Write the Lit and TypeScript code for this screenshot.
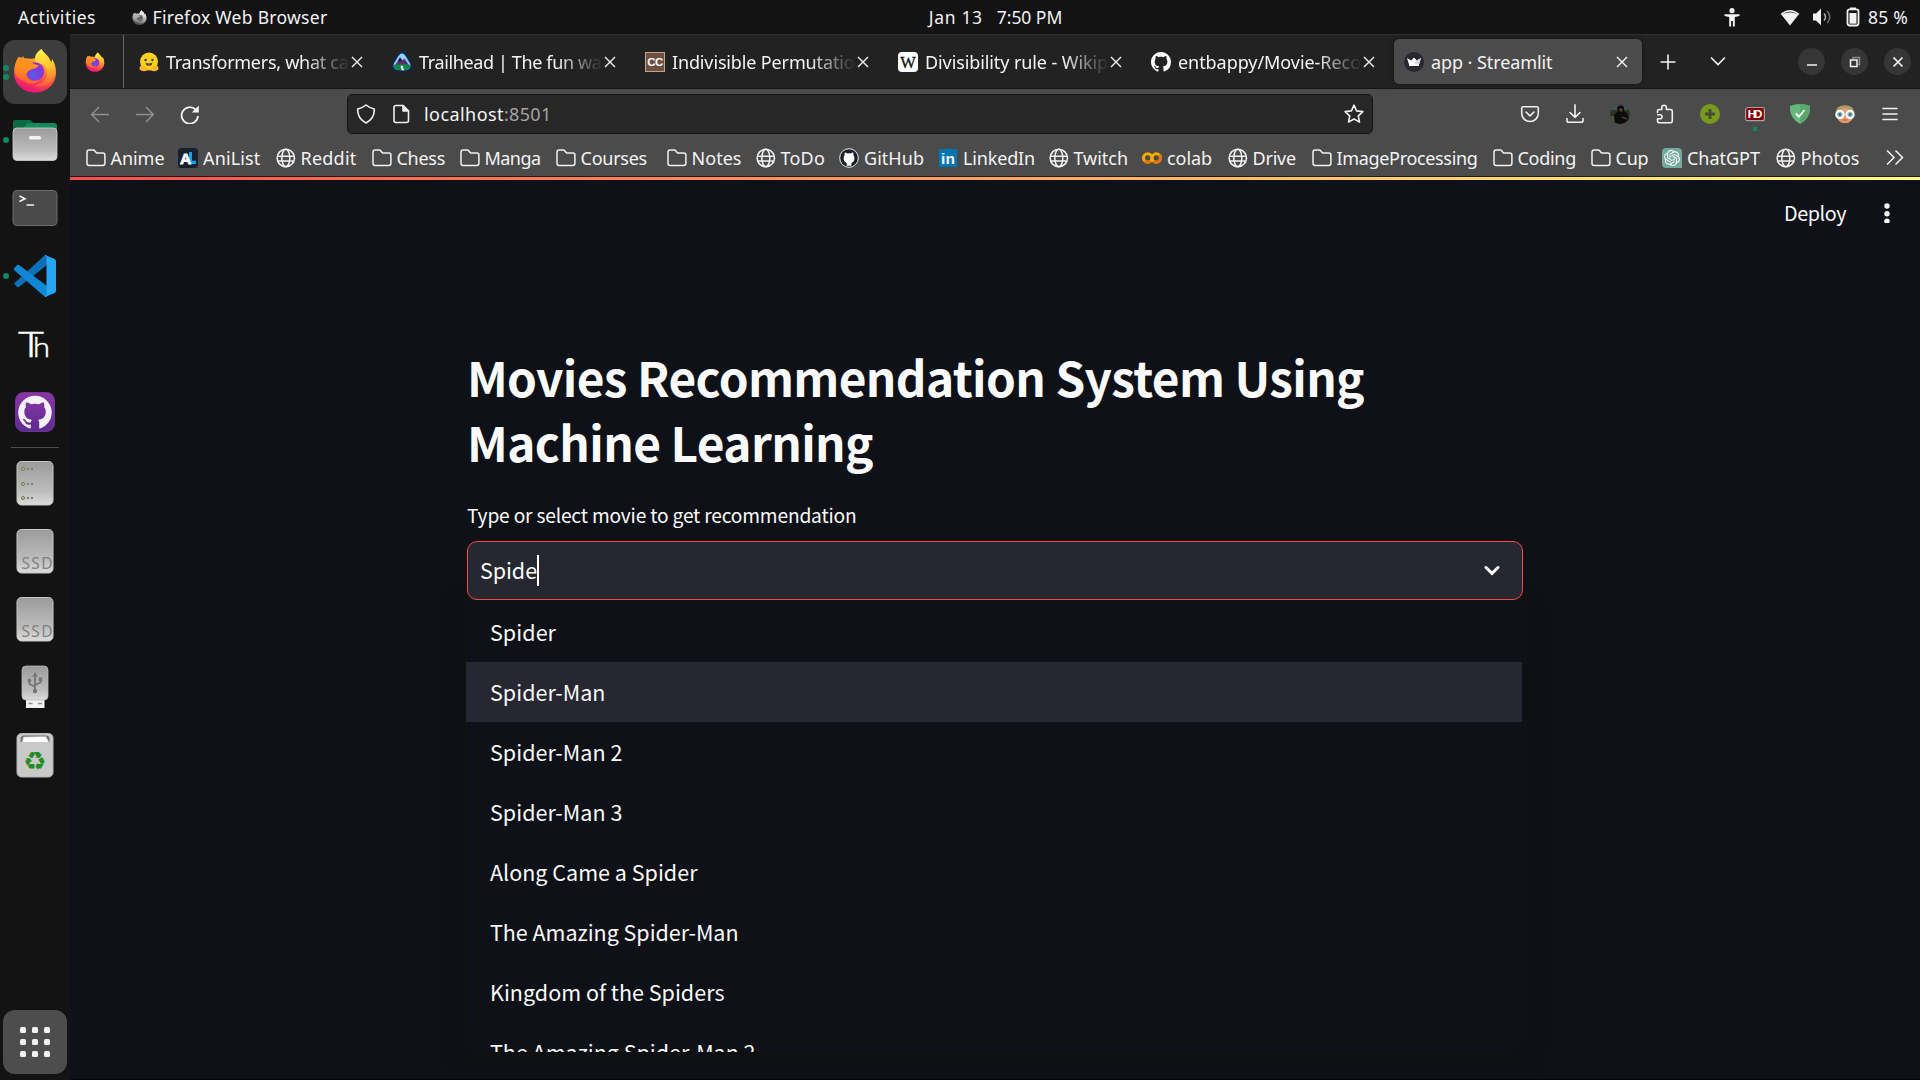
import { LitElement, html, css, svg, TemplateResult } from "lit";
import { customElement, property, query } from "lit/decorators.js";
import { styleMap } from "lit/directives/style-map.js";
import { classMap } from "lit/directives/class-map.js";

const GITHUB_MARK =
  "M8 0C3.58 0 0 3.58 0 8c0 3.54 2.29 6.53 5.47 7.59.4.07.55-.17.55-.38 0-.19-.01-.82-.01-1.49-2.01.37-2.53-.49-2.69-.94-.09-.23-.48-.94-.82-1.13-.28-.15-.68-.52-.01-.53.63-.01 1.08.58 1.23.82.72 1.21 1.87.87 2.33.66.07-.52.28-.87.51-1.07-1.78-.2-3.64-.89-3.64-3.95 0-.87.31-1.59.82-2.15-.08-.2-.36-1.02.08-2.12 0 0 .67-.21 2.2.82.64-.18 1.32-.27 2-.27.68 0 1.36.09 2 .27 1.53-1.04 2.2-.82 2.2-.82.44 1.1.16 1.92.08 2.12.51.56.82 1.27.82 2.15 0 3.07-1.87 3.75-3.65 3.95.29.25.54.73.54 1.48 0 1.07-.01 1.93-.01 2.2 0 .21.15.46.55.38A8.013 8.013 0 0016 8c0-4.42-3.58-8-8-8z";

const OPENAI_MARK =
  "M22.2819 9.8211a5.9847 5.9847 0 0 0-.5157-4.9108 6.0462 6.0462 0 0 0-6.5098-2.9A6.0651 6.0651 0 0 0 4.9807 4.1818a5.9847 5.9847 0 0 0-3.9977 2.9 6.0462 6.0462 0 0 0 .7427 7.0966 5.98 5.98 0 0 0 .511 4.9107 6.051 6.051 0 0 0 6.5146 2.9001A5.9847 5.9847 0 0 0 13.2599 24a6.0557 6.0557 0 0 0 5.7718-4.2058 5.9894 5.9894 0 0 0 3.9977-2.9001 6.0557 6.0557 0 0 0-.7475-7.0729zm-9.022 12.6081a4.4755 4.4755 0 0 1-2.8764-1.0408l.1419-.0804 4.7783-2.7582a.7948.7948 0 0 0 .3927-.6813v-6.7369l2.02 1.1686a.071.071 0 0 1 .038.052v5.5826a4.504 4.504 0 0 1-4.4945 4.4944zm-9.6607-4.1254a4.4708 4.4708 0 0 1-.5346-3.0137l.142.0852 4.783 2.7582a.7712.7712 0 0 0 .7806 0l5.8428-3.3685v2.3324a.0804.0804 0 0 1-.0332.0615L9.74 19.9502a4.4992 4.4992 0 0 1-6.1408-1.6464zM2.3408 7.8956a4.485 4.485 0 0 1 2.3655-1.9728V11.6a.7664.7664 0 0 0 .3879.6765l5.8144 3.3543-2.0201 1.1685a.0757.0757 0 0 1-.071 0l-4.8303-2.7865A4.504 4.504 0 0 1 2.3408 7.872zm16.5963 3.8558L13.1038 8.364 15.1192 7.2a.0757.0757 0 0 1 .071 0l4.8303 2.7913a4.4944 4.4944 0 0 1-.6765 8.1042v-5.6772a.79.79 0 0 0-.407-.667zm2.0107-3.0231l-.142-.0852-4.7735-2.7818a.7759.7759 0 0 0-.7854 0L9.409 9.2297V6.8974a.0662.0662 0 0 1 .0284-.0615l4.8303-2.7866a4.4992 4.4992 0 0 1 6.6802 4.66zM8.3065 12.863l-2.02-1.1638a.0804.0804 0 0 1-.038-.0567V6.0742a4.4992 4.4992 0 0 1 7.3757-3.4537l-.142.0805L8.704 5.459a.7948.7948 0 0 0-.3927.6813zm1.0976-2.3654l2.602-1.4998 2.6069 1.4998v2.9994l-2.5974 1.4997-2.6067-1.4997Z";

const icon = (size: number, body: TemplateResult, box = `0 0 ${size} ${size}`) =>
  html`<svg class="icon" width=${size} height=${size} viewBox=${box} fill="none">${body}</svg>`;

const firefoxArt = svg`
  <defs>
    <linearGradient id="ffBody" x1=".75" y1="0" x2=".35" y2="1">
      <stop offset="0" stop-color="#ffd43a"/><stop offset=".35" stop-color="#ff9a2c"/>
      <stop offset=".65" stop-color="#ff4a45"/><stop offset="1" stop-color="#e5127c"/>
    </linearGradient>
    <linearGradient id="ffFlame" x1=".4" y1="0" x2=".5" y2="1">
      <stop offset="0" stop-color="#fff44f"/><stop offset=".5" stop-color="#ffc32c"/><stop offset="1" stop-color="#ff5a3c"/>
    </linearGradient>
    <radialGradient id="ffGlobe" cx=".4" cy=".7" r=".7">
      <stop offset="0" stop-color="#5a5be8"/><stop offset=".5" stop-color="#7a3fe0"/><stop offset="1" stop-color="#a02bd0"/>
    </radialGradient>
    <linearGradient id="ffHead" x1=".5" y1="0" x2=".3" y2="1">
      <stop offset="0" stop-color="#ff9a1f"/><stop offset=".5" stop-color="#ff8a20"/><stop offset="1" stop-color="#ff5a35"/>
    </linearGradient>
  </defs>
  <path fill="url(#ffBody)" d="M21 43.500C9 43.500 0 35 0 23.500C0 17 2.500 11 5 8C12 10 18 10 22 9C24 6 25 3 27.500 0C29 4 35 6 37 13C38 12 38 11 38 10C41 14 42 19 42 23.500C42 35 33 43.500 21 43.500Z"/>
  <path fill="url(#ffFlame)" d="M27.500 0C21 4 20 9 22 13.500C29 14 33 18 33 24C33 31 28 36 20 36.500C32 40 41 33 41 22C41 17 40 13 38 10C38 12 38 13 37 14.500C36 8 30 5 27.500 0Z"/>
  <circle cx="21" cy="22.500" r="9.200" fill="url(#ffGlobe)"/>
  <path fill="url(#ffHead)" d="M0.500 22C0.500 15 3 10 5 7.500C5 9 5.500 11 6.500 12C7 10 8 8 9.500 7C9.500 9.500 11 11.500 13 12C16 12 19 15.500 24.500 16C24 19 20 19.500 17 20.500C13 22 12 25 13 28C15 32 21 33 25 31C21 36 14 36 10 32C5 30 1 27 0.500 22Z"/>`;

const folder = icon(20, svg`<path d="M1 15.200V4.200Q1 2 3.200 2H7.200Q8.100 2 8.700 2.700L10.500 4.900H16.800Q18.900 4.900 18.900 7V15.200Q18.900 17.400 16.700 17.400H3.200Q1 17.400 1 15.200Z" stroke="#f1f1f1" stroke-width="1.500"/>`);
const globe = icon(20, svg`<g stroke="#f4f4f4" stroke-width="1.500"><circle cx="9.800" cy="10" r="8.700"/><ellipse cx="9.800" cy="10" rx="4" ry="8.700"/><path d="M1 8.300H18.600M2 13H17.600"/></g>`);
const closeX = icon(12, svg`<path d="M1 1L11 11M11 1L1 11" stroke="#f3f3f3" stroke-width="1.400"/>`);

const favicons: Record<string, TemplateResult> = {
  hugging: icon(20, svg`
    <circle cx="10" cy="9.500" r="9" fill="#ffd21e"/>
    <path d="M1 18C-.5 15 2 12.500 4 14L7 15.500L10 17L13 15.500L16 14C18 12.500 20.500 15 19 18Q16 20 12 18.500L10 17.500L8 18.500Q4 20 1 18Z" fill="#ffb62a"/>
    <circle cx="6.600" cy="8" r="1.200" fill="#3a3b45"/><circle cx="13.400" cy="8" r="1.200" fill="#3a3b45"/>
    <path d="M6.500 10.500Q10 12.500 13.500 10.500Q13 14 10 14Q7 14 6.500 10.500Z" fill="#3a3b45"/><path d="M8 13Q10 11.800 12 13Q10 15 8 13Z" fill="#ef4e4e"/>`),
  trailhead: icon(20, svg`
    <path d="M10 .8C12 .8 13 2 14 3.500L18.500 11Q20.500 16 16.500 18Q10 20 3.500 18Q-.5 16 1.500 11L6 3.500C7 2 8 .8 10 .8Z" fill="#8fd4f5" stroke="#0b2a6b" stroke-width="1.400"/>
    <path d="M2.500 14L8 5.500L10.500 8.500L12.500 6.500L17.500 14Z" fill="#57306f"/><path d="M6 9L8 5.500L10 8.500L8 9.500Z" fill="#24124a"/>
    <path d="M1.800 13Q10 11.500 18.200 13Q18.500 16.500 16 17.400Q10 19 4 17.400Q1.500 16.500 1.800 13Z" fill="#0e8a43"/>
    <path d="M9 13.500Q13 14.500 10.500 15.500L12.500 18.200H9.500Q10 16 8.500 15.200Z" fill="#fff"/>`),
  chef: icon(20, svg`<rect x=".5" y=".5" width="19" height="19" fill="#6d5141" stroke="#c3a58f"/><text x="10" y="14" text-anchor="middle" font-family="Liberation Sans, sans-serif" font-weight="700" font-size="11.500" letter-spacing="-.5" fill="#fff">CC</text>`),
  wiki: icon(20, svg`<rect width="20" height="20" rx="4" fill="#fff"/><text x="10" y="15.500" text-anchor="middle" font-family="Liberation Serif, serif" font-size="16.500" textLength="17" fill="#111" stroke="#111" stroke-width=".3">W</text>`),
  github: icon(20, svg`<path d=${GITHUB_MARK} fill="#fff"/>`, "0 0 16 16"),
  streamlit: icon(20, svg`<circle cx="10" cy="10" r="10" fill="#262730"/><path d="M3 6L7.200 8.600L10 5.500L12.800 8.600L17 6L15 12.600H5Z" fill="#fff"/><path d="M12.800 8.600L17 6L15 12.600H10Z" fill="#d5d5dc"/><rect x="5" y="12" width="10" height="2" rx=".6" fill="#fff"/>`),
  firefox: icon(20, firefoxArt, "0 -1 42 45"),
  anilist: icon(20, svg`<rect width="20" height="20" rx="3" fill="#19212d"/><path d="M11 4H14V12.700H18V16H13Q11 16 11 14Z" fill="#02a9ff"/><text x="2" y="15.700" font-family="Liberation Sans, sans-serif" font-weight="700" font-size="15.500" fill="#fff" stroke="#fff" stroke-width=".8">A</text>`),
  githubBadge: icon(20, svg`<circle cx="10" cy="10" r="9.300" fill="#191e26" stroke="#eee" stroke-width="1"/><g transform="translate(1.300 1.300) scale(1.090)"><path d="M5.800 15.200V12.500Q3 11.500 3 8.200Q3 6.500 4 5.300Q3.700 4 4.200 3Q5.300 3 6.500 3.900Q8 3.500 9.500 3.900Q10.700 3 11.800 3Q12.300 4 12 5.300Q13 6.500 13 8.200Q13 11.500 10.200 12.500V15.200Z" fill="#fff"/></g>`),
  linkedin: icon(20, svg`<rect x="1" y="1" width="18" height="18" rx="1" fill="#0077b5"/><text x="10" y="15.800" text-anchor="middle" font-family="Liberation Sans, sans-serif" font-weight="700" font-size="15.500" fill="#fff">in</text>`),
  colab: icon(20, svg`<g stroke-width="3"><circle cx="5.700" cy="10" r="4.200" stroke="#f9ab00"/><circle cx="14.300" cy="10" r="4.200" stroke="#f9ab00"/><path d="M2.700 13A4.200 4.200 0 0 0 8.700 13" stroke="#e8710a"/><path d="M17.300 7A4.200 4.200 0 0 1 11.300 13" stroke="#e8710a"/></g>`),
  chatgpt: icon(20, svg`<path d="M4 0H16Q20 0 20 4V20H4Q0 20 0 16V4Q0 0 4 0Z" fill="#74aa9c"/><g transform="translate(2 2) scale(.667)"><path d=${OPENAI_MARK} fill="#fff"/></g>`),
  folder,
  globe,
};

/** Text whose tracking is adjusted so that the run fills a given width. */
@customElement("fit-text")
class FitText extends LitElement {
  @property() text = "";
  @property({ type: Number }) width = 0;
  @query("span") private run!: HTMLSpanElement;

  static styles = css`
    :host { display: inline-block; white-space: pre; flex: none; }
  `;

  updated() {
    this.run.style.letterSpacing = "0px";
    const natural = this.run.getBoundingClientRect().width;
    this.run.style.letterSpacing = `${(this.width - natural) / this.text.length}px`;
  }

  render() {
    return html`<span>${this.text}</span>`;
  }
}

const shared = css`
  * { box-sizing: border-box; }
  :host { box-sizing: border-box; }
  .icon { display: block; flex: none; }
`;

@customElement("top-bar")
class TopBar extends LitElement {
  static styles = [shared, css`
    :host { display: grid; grid-template-columns: 1fr auto 1fr; align-items: center; height: 34px; background: #131313; color: #f2f2f2; font: 17.500px/24px "Noto Sans", sans-serif; }
    .group { display: flex; align-items: center; }
    .left { padding-left: 18px; }
    .app { display: flex; align-items: center; gap: 6px; margin-left: 35.500px; }
    .clock { gap: 14px; padding: 0 0 1px 71px; }
    .right { justify-content: flex-end; padding-right: 12px; }
    .access { margin-right: 40px; }
    .wifi { margin-right: 12px; }
    .sound { margin-right: 14px; }
    .battery { margin-right: 8px; }
    .gray { filter: grayscale(1) brightness(1.100); }
  `];

  render() {
    return html`
      <div class="group left">
        <fit-text text="Activities" width="78"></fit-text>
        <div class="app">
          <span class="gray">${icon(15, firefoxArt, "0 -1 42 45")}</span>
          <fit-text text="Firefox Web Browser" width="175"></fit-text>
        </div>
      </div>
      <div class="group clock">
        <fit-text text="Jan 13" width="54"></fit-text>
        <fit-text text="7:50 PM" width="65.500"></fit-text>
      </div>
      <div class="group right">
        <svg class="icon access" width="16" height="19" viewBox="0 0 16 19"><circle cx="8" cy="2.700" r="2.600" fill="#f2f2f2"/><path d="M.5 6.300H15.500V8L10.800 9V18.500H8.900V13H7.100V18.500H5.200V9L.5 8Z" fill="#f2f2f2"/></svg>
        <svg class="icon wifi" width="20" height="17" viewBox="0 0 20 17"><path d="M1 5.500Q10-2 19 5.500" stroke="#f2f2f2" stroke-width="1.500" fill="none"/><path d="M1.500 5.800Q10 .5 18.500 5.800L10 16.500Z" fill="#f2f2f2"/></svg>
        <svg class="icon sound" width="20" height="18" viewBox="0 0 20 18"><path d="M1 5.500H4L9 .8V17.200L4 12.500H1Z" fill="#f2f2f2"/><path d="M12 5.500Q15 9 12 12.500" stroke="#aaa" stroke-width="1.500" fill="none"/><path d="M15.200 3Q20.300 9 15.200 15" stroke="#6f6f6f" stroke-width="1.500" fill="none"/></svg>
        <svg class="icon battery" width="14" height="20" viewBox="0 0 14 20"><path d="M4 .5H10V2H4Z" fill="#f2f2f2"/><rect x="1.500" y="2.300" width="11" height="16.200" rx="2.200" fill="none" stroke="#f2f2f2" stroke-width="1.800"/><rect x="3.500" y="6" width="7" height="10.700" fill="#f2f2f2"/></svg>
        <fit-text text="85 %" width="40"></fit-text>
      </div>
    `;
  }
}

interface DockItem { name: string; art: TemplateResult; dots?: number; active?: boolean; }

const panel = svg`
  <rect x="14" y="10.500" width="36" height="43.500" rx="4.500" fill="url(#metal)" stroke="#c9c9c9"/>`;
const metal = svg`<defs><linearGradient id="metal" x1="0" y1="0" x2="0" y2="1"><stop offset="0" stop-color="#9b9b9b"/><stop offset=".7" stop-color="#bdbdbd"/><stop offset="1" stop-color="#dcdcdc"/></linearGradient></defs>`;
const ssd = svg`${metal}${panel}<text x="18.500" y="49.500" font-family="Noto Sans, sans-serif" font-size="15.500" textLength="31" fill="#828282">SSD</text>`;
const led = (y: number) => svg`<circle cx="20" cy=${y} r="1.600" fill="#9ccc3c" stroke="#6c6c6c" stroke-width=".8"/><path d=${`M24 ${y}H26M28 ${y}H30`} stroke="#7c7c7c" stroke-width="2"/>`;

const launchers: DockItem[] = [
  { name: "firefox", active: true, dots: 2, art: svg`<svg x="11" y="9" width="42" height="44" viewBox="0 0 42 44">${firefoxArt}</svg>` },
  { name: "files", dots: 1, art: svg`${metal}
    <path d="M10 30V15Q10 12 13 12H26Q28 12 29 14L30 15H51Q54 15 54 18V30Z" fill="#118a5a"/>
    <path d="M10 21V15Q10 12 13 12H26Q28 12 29 14L30 15H24L20 21Z" fill="#0b6b45"/>
    <rect x="10" y="20" width="44" height="32.500" rx="4" fill="url(#metal)" stroke="#cfcfcf" stroke-width=".8"/>
    <rect x="26" y="28" width="12" height="3.400" rx="1.500" fill="#f4f4f4"/>` },
  { name: "terminal", art: svg`<rect x="10" y="14.500" width="44" height="35" rx="4" fill="#4a4a4a" stroke="#6c6c6c"/><path d="M16.500 20L22 22.700L16.500 25.500M23.500 29H31" stroke="#f2f2f2" stroke-width="1.600"/>` },
  { name: "code", dots: 1, art: svg`
    <path d="M11 39.500L14 43Q15 43.600 16 43L44 21V11L42 11Z" fill="#0d6fb5"/>
    <path d="M11 24.500L14 21Q15 20.500 16 21L44 42V53L42 53L11 26Z" fill="#1187d3"/>
    <path d="M42 11L51.500 15Q53 15.800 53 17V47Q53 48.300 51.500 49L42 53Q43.500 52 43.500 50V14Q43.500 12 42 11Z" fill="#26a6f2"/>` },
  { name: "notes", art: svg`<g font-family="Lato, sans-serif" font-weight="300" fill="#fff" stroke="#fff" stroke-width=".5"><text x="15" y="44.500" font-size="36" textLength="26" lengthAdjust="spacingAndGlyphs">T</text><text x="30" y="45" font-size="28" textLength="17" lengthAdjust="spacingAndGlyphs">h</text></g>` },
  { name: "github", art: svg`<defs><linearGradient id="violet" x1="0" y1="0" x2="0" y2="1"><stop offset="0" stop-color="#8b35a5"/><stop offset="1" stop-color="#5c2c91"/></linearGradient></defs>
    <rect x="12.500" y="12.500" width="39" height="39" rx="8" fill="url(#violet)" stroke="#7a3a9c" stroke-width=".8"/><g transform="translate(15.200 15.700) scale(2.100)"><path d=${GITHUB_MARK} fill="#f4f0f8"/></g>` },
];

const drives: DockItem[] = [
  { name: "disk", art: svg`${metal}${panel}${led(18)}${led(33)}${led(47)}` },
  { name: "ssd-a", art: ssd },
  { name: "ssd-b", art: ssd },
  { name: "usb", art: svg`${metal}<rect x="23" y="44" width="18.500" height="9" fill="#f2f2f2"/><path d="M25.500 48.500H29.500M35 48.500H39" stroke="#8f8f8f" stroke-width="1.600"/>
    <rect x="19" y="11" width="26" height="34" rx="4" fill="url(#metal)" stroke="#b8b8b8" stroke-width=".8"/>
    <path d="M32 36V19M32 32L26.500 29V25M32 30L37.500 27.500V23.500" stroke="#757575" stroke-width="1.800"/><path d="M29.300 21.500L32 17L34.700 21.500Z" fill="#757575"/><circle cx="32" cy="36" r="2.200" fill="#757575"/><circle cx="26.500" cy="25.500" r="1.900" fill="#757575"/><rect x="35.800" y="22.500" width="3.500" height="3.500" fill="#757575"/>` },
  { name: "trash", art: svg`${metal}<rect x="14" y="10.500" width="36" height="43.500" rx="4.500" fill="#c9c9c9" stroke="#b5b5b5"/><path d="M17.500 19V16Q17.500 12.500 21 12.500H43Q46.500 12.500 46.500 16V19Z" fill="#6e6e6e"/><path d="M19 19.500L20.500 14L43 13.500L46 19.500Z" fill="#fff" stroke="#bbb" stroke-width=".7"/>
    <text x="32" y="46.500" text-anchor="middle" font-family="DejaVu Sans, sans-serif" font-size="26" fill="#228b22">♻</text>` },
];

@customElement("app-dock")
class AppDock extends LitElement {
  static styles = [shared, css`
    :host { display: flex; flex-direction: column; align-items: center; width: 70px; padding: 6px 3px; background: #131313; }
    .list { display: flex; flex-direction: column; gap: 4px; }
    .tile { position: relative; width: 64px; height: 64px; border-radius: 12px; }
    .active { background: #3d3d3d; }
    .dots { position: absolute; left: 0; top: 0; height: 64px; display: flex; flex-direction: column; justify-content: center; gap: 3px; }
    .dot { width: 6px; height: 6px; border-radius: 50%; background: #0f8a60; }
    .rule { width: 48px; height: 1px; margin: 3px 0; background: #4f4f4f; }
    .apps { margin-top: auto; background: #4d4d4d; }
  `];

  private tile(item: DockItem) {
    return html`<div class=${classMap({ tile: true, active: !!item.active })}>
      ${icon(64, item.art)}
      <div class="dots">${Array.from({ length: item.dots ?? 0 }, () => html`<span class="dot"></span>`)}</div>
    </div>`;
  }

  render() {
    const grid = [17, 29, 41];
    return html`
      <div class="list">${launchers.map((i) => this.tile(i))}</div>
      <div class="rule"></div>
      <div class="list">${drives.map((i) => this.tile(i))}</div>
      <div class="tile apps">${icon(64, svg`${grid.map((y) => grid.map((x) => svg`<rect x=${x} y=${y} width="6" height="6" rx="1.500" fill="#f0f0f0"/>`))}`)}</div>
    `;
  }
}

const tabs = [
  { icon: "hugging", title: "Transformers, what ca", width: 182.5 },
  { icon: "trailhead", title: "Trailhead | The fun wa", width: 182.5 },
  { icon: "chef", title: "Indivisible Permutatio", width: 182.5 },
  { icon: "wiki", title: "Divisibility rule - Wikip", width: 183 },
  { icon: "github", title: "entbappy/Movie-Reco", width: 183 },
  { icon: "streamlit", title: "app · Streamlit", width: 121.5, active: true },
];

// Each entry: icon, label, label width, distance to the next entry's icon.
const bookmarks: [string, string, number, number][] = [
  ["folder", "Anime", 54, 92.5],
  ["anilist", "AniList", 57.5, 97.5],
  ["globe", "Reddit", 56, 96],
  ["folder", "Chess", 48.5, 88],
  ["folder", "Manga", 56, 96],
  ["folder", "Courses", 66.5, 111],
  ["folder", "Notes", 50, 89],
  ["globe", "ToDo", 44.5, 83.5],
  ["githubBadge", "GitHub", 60, 99],
  ["linkedin", "LinkedIn", 72, 110.5],
  ["globe", "Twitch", 54.5, 93.5],
  ["colab", "colab", 45, 85.5],
  ["globe", "Drive", 43.5, 84],
  ["folder", "ImageProcessing", 141, 181],
  ["folder", "Coding", 58.5, 98],
  ["folder", "Cup", 33, 71.5],
  ["chatgpt", "ChatGPT", 73, 113.5],
  ["globe", "Photos", 59, 109],
];

const S = (body: TemplateResult, size = 20) => icon(size, svg`<g stroke="#f1f1f1" stroke-width="1.600" stroke-linecap="round" stroke-linejoin="round">${body}</g>`);

const extensions: TemplateResult[] = [
  S(svg`<path d="M3.300 2.700H16.700Q18.300 2.700 18.300 4.300V9.200A8.300 8.300 0 0 1 1.700 9.200V4.300Q1.700 2.700 3.300 2.700ZM6 8L10 11.800L14 8"/>`),
  S(svg`<path d="M10 .8V13M5 8.500L10 13.300L15 8.500M2 14.500V16.500Q2 18.300 3.800 18.300H16.200Q18 18.300 18 16.500V14.500"/>`),
  icon(20, svg`<defs><clipPath id="face"><circle cx="10" cy="10" r="10"/></clipPath></defs><g clip-path="url(#face)"><rect width="20" height="20" fill="#2a3524"/><rect width="20" height="6" fill="#46545a"/><rect y="12" width="6" height="6" fill="#47562f"/><path d="M5 20L4 12Q5 8.500 8 8L7 4Q8 .8 11.500 1.200Q14.800 2 14 7L17 9L20 20Z" fill="#0c0c0e"/><path d="M9 4.500H12.500V7.500H10Z" fill="#5d4538"/><path d="M12 13L17 15" stroke="#6d4c3a" stroke-width="1.200"/></g>`),
  S(svg`<path d="M2.500 8.500V7Q2.500 5.500 4 5.500H6.800V3.500A2.300 2.300 0 0 1 11.400 3.500V5.500H15.500Q17.300 5.500 17.300 7.300V16.700Q17.300 18.700 15.300 18.700H4.500Q2.500 18.700 2.500 16.700V14.800H5A2 2 0 0 0 5 10.800H2.700"/>`),
  icon(20, svg`<circle cx="10" cy="10" r="10" fill="#7a9a1e"/><path d="M10 5V15M5 10H15" stroke="#454b35" stroke-width="3"/>`),
  icon(20, svg`<rect x=".6" y="3.500" width="18.800" height="13.200" rx="2" fill="#850000" stroke="#a9a0a0" stroke-width="1.200"/><text x="10" y="14.300" text-anchor="middle" font-family="Liberation Sans, sans-serif" font-weight="700" font-size="11.500" textLength="14.500" fill="#fff">HD</text>`),
  icon(20, svg`<path d="M0 2Q5 0 10 0Q15 0 20 2V6Q19 15 10 20Q1 15 0 6Z" fill="#67b979"/><path d="M10 0Q15 0 20 2V6Q19 15 10 20Z" fill="#5aa76c"/><path d="M5.800 9.500L9 12.700L14.500 6" stroke="#fff" stroke-width="1.800"/>`),
  icon(20, svg`<circle cx="10" cy="10.500" r="8.700" fill="#e69a6b"/><path d="M.8 10Q0 1.500 9.500 1.200Q19.500 1 19.200 10L15 6.500L4 7Z" fill="#b09a63"/><path d="M6 5Q10 3 15 6L13 8H7Z" fill="#e0a078"/><circle cx="4.900" cy="10.500" r="3.700" fill="#8fc0d0" stroke="#fff" stroke-width="1.900"/><circle cx="15.100" cy="10.500" r="3.700" fill="#8fc0d0" stroke="#fff" stroke-width="1.900"/><circle cx="4.900" cy="10.500" r="1.300" fill="#33596b"/><circle cx="15.100" cy="10.500" r="1.300" fill="#33596b"/><path d="M7.500 16H12.500" stroke="#b35a48"/>`),
  S(svg`<path d="M3 4.500H17M3 10H17M3 15.500H17"/>`),
];

@customElement("browser-chrome")
class BrowserChrome extends LitElement {
  static styles = [shared, css`
    :host { display: block; background: #4b4b4b; color: #f4f4f4; font: 18px/26px "Noto Sans", sans-serif; }
    .strip { display: flex; align-items: center; height: 55px; background: #222; border-top: 1px solid #303030; border-bottom: 1px solid #141414; }
    .pinned { width: 54px; height: 53px; padding: 0 0 0 15px; display: flex; align-items: center; border-right: 1px solid #686868; }
    .tabs { display: flex; gap: 5px; padding-left: 5px; }
    .tab { display: flex; align-items: center; width: 248px; height: 45px; padding-left: 10px; border-radius: 5px; }
    .tab.active { background: #4b4b4b; box-shadow: 0 0 4px rgba(0, 0, 0, 0.450); }
    .title { width: 184px; margin: 0 -1px 0 7px; height: 26px; white-space: nowrap; -webkit-mask-image: linear-gradient(90deg, #000 75%, transparent 100%); mask-image: linear-gradient(90deg, #000 75%, transparent 100%); }
    .active .title { -webkit-mask-image: none; mask-image: none; }
    .x { margin-left: 1.500px; }
    .extra { display: flex; align-items: center; gap: 32px; margin-left: 18px; }
    .win { display: flex; gap: 16px; margin-left: auto; padding-right: 9px; }
    .round { width: 27px; height: 27px; border-radius: 50%; background: #363636; display: grid; place-items: center; }
    .nav { display: flex; align-items: center; height: 49px; padding: 0 20px; }
    .moves { display: flex; gap: 25px; width: 257px; }
    .url { display: flex; align-items: center; width: 1026px; height: 40px; margin-top: 1px; padding: 0 8px 1px; border: 1px solid #161616; border-radius: 5px; background: #272727; }
    .page { margin: 0 13px 0 15px; }
    .port { color: #a3a3a3; }
    .star { margin-left: auto; }
    .exts { display: flex; gap: 25px; margin-left: auto; margin-top: 1px; }
    .ext { position: relative; width: 20px; height: 20px; }
    .hot::after { content: ""; position: absolute; left: 8px; top: 23px; width: 4px; height: 4px; background: #0f8a60; }
    .marks { display: flex; align-items: center; height: 39px; padding: 1px 0 0 15.500px; border-bottom: 1px solid #1c1c1c; }
    .mark { display: flex; align-items: center; gap: 5px; flex: none; }
    .mark fit-text { padding-top: 1px; }
  `];

  render() {
    return html`
      <div class="strip">
        <div class="pinned">${favicons.firefox}</div>
        <div class="tabs">
          ${tabs.map((t) => html`
            <div class=${classMap({ tab: true, active: !!t.active })}>
              ${favicons[t.icon]}
              <div class="title"><fit-text text=${t.title} width=${t.width}></fit-text></div>
              <span class="x">${closeX}</span>
            </div>`)}
        </div>
        <div class="extra">
          ${icon(16, svg`<path d="M8 .5V15.500M.5 8H15.500" stroke="#f3f3f3" stroke-width="1.600"/>`)}
          ${icon(20, svg`<path d="M3 5.500L10 12.500L17 5.500" stroke="#f3f3f3" stroke-width="1.600"/>`)}
        </div>
        <div class="win">
          <div class="round">${icon(12, svg`<path d="M1 9H11" stroke="#f3f3f3" stroke-width="1.500"/>`)}</div>
          <div class="round">${icon(12, svg`<path d="M4 3V1.500H10.500V8.500H9" stroke="#8f8f8f" stroke-width="1.400"/><rect x="1.500" y="4" width="6.500" height="6.500" stroke="#f3f3f3" stroke-width="1.500"/>`)}</div>
          <div class="round">${icon(12, svg`<path d="M1.500 1.500L10.500 10.500M10.500 1.500L1.500 10.500" stroke="#f3f3f3" stroke-width="1.700"/>`)}</div>
        </div>
      </div>
      <div class="nav">
        <div class="moves">
          ${icon(20, svg`<path d="M19 11.500H2M9 4L1.700 11.500L9 19" stroke="#8e8e8e" stroke-width="1.500"/>`, "0 1 20 20")}
          ${icon(20, svg`<path d="M1 11.500H18M11 4L18.300 11.500L11 19" stroke="#8e8e8e" stroke-width="1.500"/>`, "0 1 20 20")}
          ${icon(20, svg`<path d="M18 12A8.200 8.200 0 1 1 15.500 5.500" stroke="#f3f3f3" stroke-width="1.800"/><path d="M18.800 1.500V8.500H11.800Z" fill="#f3f3f3"/>`)}
        </div>
        <div class="url">
          ${S(svg`<path d="M10 1Q13 3.600 18.300 5Q18.700 14.500 10 19Q1.300 14.500 1.700 5Q7 3.600 10 1Z"/>`)}
          <span class="page">${S(svg`<path d="M5 1.500H12L17.500 7V16.500Q17.500 18.500 15.500 18.500H5Q3 18.500 3 16.500V3.500Q3 1.500 5 1.500Z"/><path d="M12 1.500V7H17.500Z" fill="#f1f1f1"/>`)}</span>
          <fit-text text="localhost" width="80"></fit-text><fit-text class="port" text=":8501" width="47.500"></fit-text>
          <span class="star">${S(svg`<path d="M10 1.200L12.600 6.900L18.900 7.600L14.300 11.900L15.500 18.100L10 15L4.500 18.100L5.700 11.900L1.100 7.600L7.400 6.900Z"/>`)}</span>
        </div>
        <div class="exts">${extensions.map((e, i) => html`<div class=${classMap({ ext: true, hot: i === 5 })}>${e}</div>`)}</div>
      </div>
      <div class="marks">
        ${bookmarks.map(([name, label, width, step]) => html`
          <div class="mark" style=${styleMap({ width: `${step}px` })}>${favicons[name]}<fit-text text=${label} width=${width}></fit-text></div>`)}
        ${icon(20, svg`<path d="M2 2.500L9 9.500L2 16.500M10.500 2.500L17.500 9.500L10.500 16.500" stroke="#f3f3f3" stroke-width="1.500"/>`)}
      </div>
    `;
  }
}

const movies: [string, number][] = [
  ["Spider", 66], ["Spider-Man", 115.5], ["Spider-Man 2", 132.5], ["Spider-Man 3", 132.5],
  ["Along Came a Spider", 207.5], ["The Amazing Spider-Man", 248.5], ["Kingdom of the Spiders", 234.5],
  ["The Amazing Spider-Man 2", 265.5],
];

@customElement("movie-page")
class MoviePage extends LitElement {
  static styles = [shared, css`
    :host { display: flex; flex-direction: column; position: relative; background: #0e1117; color: #fafafa; font-family: "Noto Sans CJK SC", "Noto Sans", sans-serif; overflow: hidden; border-bottom: 1px solid #050608; }
    .glow { height: 3px; flex: none; background: linear-gradient(90deg, #ff4b4b, #fffd80); }
    .head { display: flex; flex: none; justify-content: flex-end; align-items: center; height: 65px; padding-right: 23px; gap: 31px; font-size: 19.800px; line-height: 28px; }
    .main { width: 1056px; margin: 99px 0 0 397px; }
    h1 { margin: 0; font-size: 47.800px; line-height: 65px; font-weight: 700; display: flex; flex-direction: column; align-items: flex-start; }
    .label { margin-top: 25px; font-size: 19.200px; line-height: 32px; height: 42px; }
    .select { position: relative; z-index: 1; display: flex; align-items: center; height: 59px; padding: 0 20px 1px 12px; border: 1px solid #f8494a; border-radius: 10px; background: #262730; font-size: 21.500px; line-height: 32px; }
    .caret { width: 2px; height: 31px; background: #fff; }
    .chev { margin-left: auto; }
    .list { margin: 0 0 0 -1px; width: 1056px; height: 452px; padding-top: 2px; overflow: hidden; border-radius: 0 0 10px 10px; background: #0e1117; box-shadow: 0 6px 24px rgba(18, 17, 14, 0.900); font-size: 21.500px; }
    .item { height: 60px; padding-left: 24px; display: flex; align-items: center; line-height: 32px; }
    .on { background: #262730; }
  `];

  render() {
    return html`
      <div class="glow"></div>
      <div class="head">
        <fit-text text="Deploy" width="62"></fit-text>
        ${icon(20, svg`<g fill="#fafafa"><circle cx="10" cy="2" r="2.700"/><circle cx="10" cy="9.700" r="2.700"/><circle cx="10" cy="17.300" r="2.700"/></g>`, "0 -1 20 20")}
      </div>
      <div class="main">
        <h1>
          <fit-text text="Movies Recommendation System Using" width="897"></fit-text>
          <fit-text text="Machine Learning" width="406"></fit-text>
        </h1>
        <div class="label"><fit-text text="Type or select movie to get recommendation" width="389.500"></fit-text></div>
        <div class="select">
          <fit-text text="Spide" width="57"></fit-text><span class="caret"></span>
          <span class="chev">${icon(20, svg`<path d="M4 7.500L10 13.300L16 7.500" stroke="#fff" stroke-width="3" stroke-linecap="round"/>`)}</span>
        </div>
        <div class="list">
          ${movies.map(([name, w], i) => html`<div class=${classMap({ item: true, on: i === 1 })}><fit-text text=${name} width=${w}></fit-text></div>`)}
        </div>
      </div>
    `;
  }
}

@customElement("app-root")
class AppRoot extends LitElement {
  static styles = css`
    :host { display: grid; grid-template-rows: 34px 1046px; width: 1920px; height: 1080px; overflow: hidden; background: #131313; }
    .body { display: grid; grid-template-columns: 70px 1850px; }
    .window { display: grid; grid-template-rows: 143px 903px; }
  `;

  render() {
    return html`
      <top-bar></top-bar>
      <div class="body">
        <app-dock></app-dock>
        <div class="window">
          <browser-chrome></browser-chrome>
          <movie-page></movie-page>
        </div>
      </div>
    `;
  }
}
